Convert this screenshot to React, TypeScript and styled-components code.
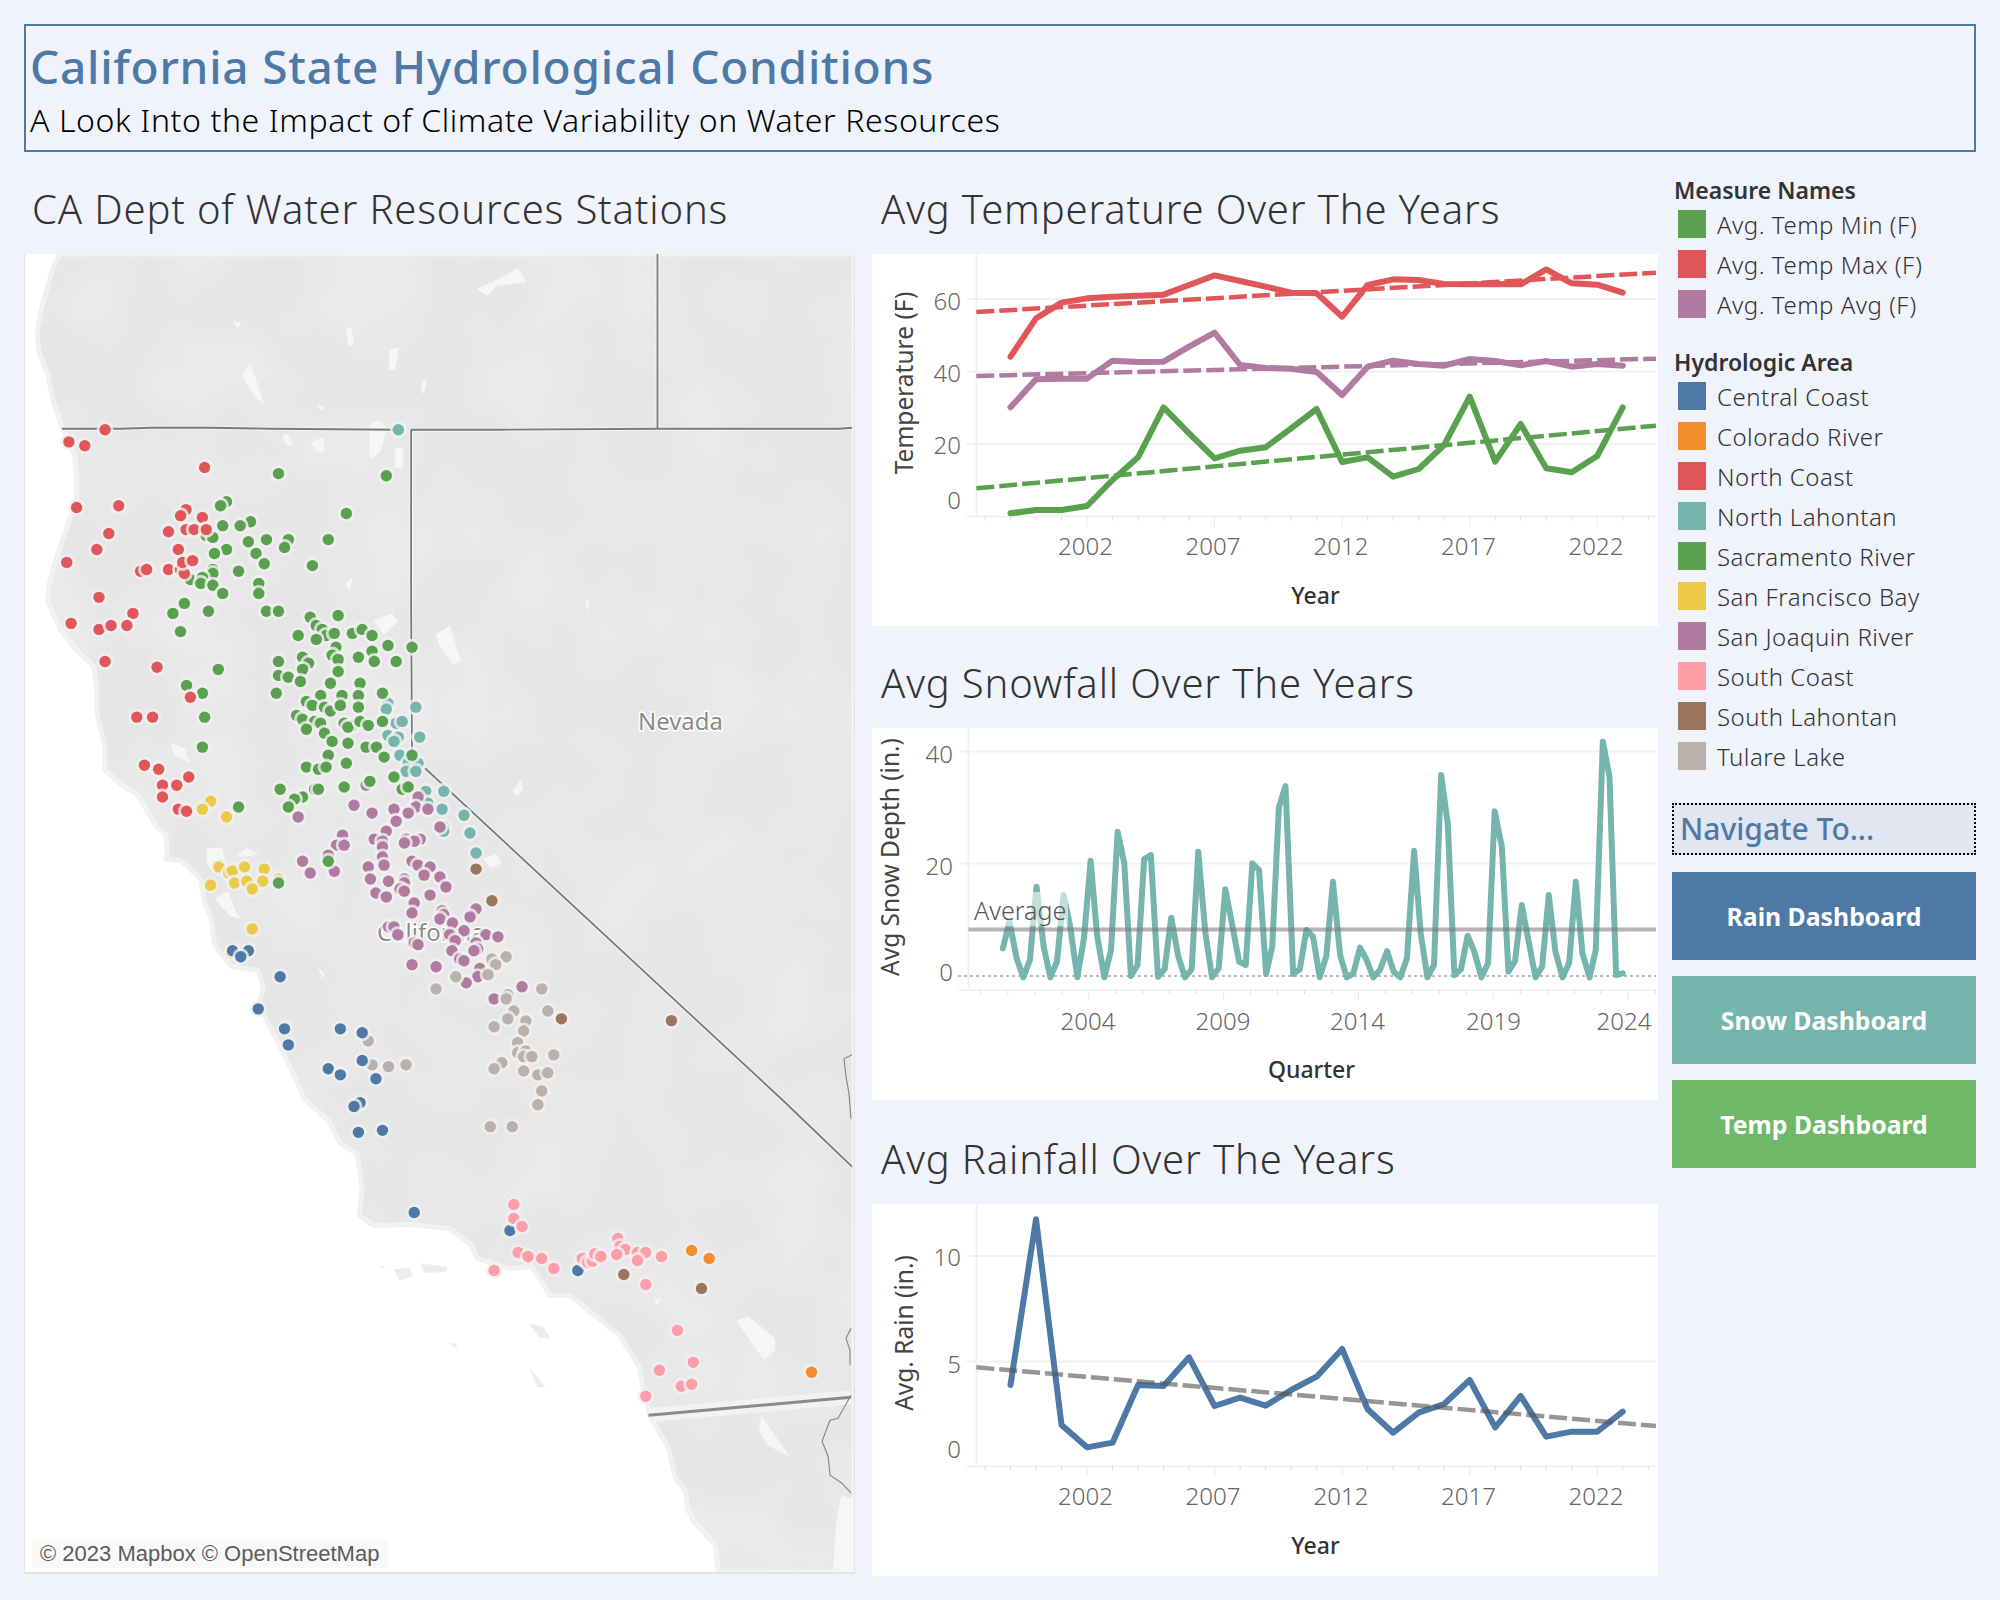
import React from "react";
import styled, { createGlobalStyle } from "styled-components";

const Global = createGlobalStyle`
  html, body { margin: 0; padding: 0; background: #f0f3fb; }
  * { box-sizing: border-box; }
`;

const UI = `"Noto Sans", "Open Sans", sans-serif`;

const Page = styled.div`
  width: 2000px;
  height: 1600px;
  padding: 24px;
  background: #f0f3fb;
  font-family: ${UI};
`;
const Header = styled.header`
  height: 128px;
  border: 2px solid #4e79a7;
  padding: 10px 0 0 4px;
`;
const Title = styled.h1`
  margin: 0;
  font-size: 46px;
  line-height: 60px;
  font-weight: 500;
  color: #4e79a7;
  letter-spacing: 0.75px;
  white-space: nowrap;
`;
const Subtitle = styled.p`
  margin: 4px 0 0;
  font-size: 32px;
  line-height: 40px;
  font-weight: 300;
  letter-spacing: 0.6px;
  color: #000;
  white-space: nowrap;
`;
const Main = styled.main`
  display: flex;
  margin-top: 18px;
`;
const MapColumn = styled.section`
  width: 831px;
  margin-right: 17px;
`;
const MidColumn = styled.div`
  width: 786px;
  margin-right: 14px;
`;
const SideColumn = styled.aside`
  width: 304px;
`;
const SectionTitle = styled.h2<{ $indent: number }>`
  margin: 0;
  height: 84px;
  padding: 14px 0 0 ${(p) => p.$indent}px;
  font-size: 40px;
  line-height: 50px;
  font-weight: 300;
  letter-spacing: 0.85px;
  color: #333;
  white-space: nowrap;
`;
const ChartBlock = styled.section<{ $gap: number }>`
  margin-top: ${(p) => p.$gap}px;
`;
const ChartPanel = styled.div`
  height: 372px;
  background: #fff;
`;
const Frame = styled.svg`
  display: block;
  width: 100%;
  height: 100%;
`;
const MapPanel = styled.div`
  position: relative;
  height: 1320px;
  background: #fff;
  border-left: 1px solid #e4e4e4;
  border-right: 1px solid #e4e4e4;
  border-bottom: 2px solid #e4e4e4;
`;
const Attribution = styled.div`
  position: absolute;
  left: 7px;
  bottom: 4px;
  width: 356px;
  height: 29px;
  padding-left: 8px;
  background: rgba(248, 248, 248, 0.8);
  font-family: "Liberation Sans", Arial, sans-serif;
  font-size: 22px;
  line-height: 29px;
  color: #5c5c5c;
  white-space: nowrap;
`;
const MapLabel = styled.text`
  font-family: ${UI};
  font-size: 24px;
  fill: #8a8a8a;
  stroke: #fff;
  stroke-width: 3px;
  paint-order: stroke;
  text-anchor: middle;
`;
const TickLabel = styled.text<{ $anchor: string }>`
  font-family: ${UI};
  font-size: 24px;
  font-weight: 300;
  fill: #666;
  text-anchor: ${(p) => p.$anchor};
`;
const AxisTitleY = styled.text`
  font-family: ${UI};
  font-size: 24.5px;
  font-weight: 400;
  fill: #444;
  text-anchor: middle;
`;
const AxisTitleX = styled.text`
  font-family: ${UI};
  font-size: 23px;
  font-weight: 500;
  fill: #333;
  text-anchor: middle;
`;
const AverageText = styled.text`
  font-family: ${UI};
  font-size: 25px;
  font-weight: 300;
  fill: #555;
`;
const LegendTitle = styled.h3<{ $top: number }>`
  margin: ${(p) => p.$top}px 0 0 2px;
  height: 33.7px;
  padding-top: 8px;
  font-size: 23px;
  line-height: 24px;
  font-weight: 600;
  color: #333;
  white-space: nowrap;
`;
const LegendRow = styled.div`
  display: flex;
  align-items: center;
  height: 40px;
  padding-left: 6px;
`;
const Swatch = styled.span<{ $color: string }>`
  width: 28px;
  height: 28px;
  margin-right: 11px;
  background: ${(p) => p.$color};
`;
const LegendText = styled.span`
  padding-top: 2px;
  font-size: 24px;
  font-weight: 300;
  letter-spacing: 0.5px;
  color: #333;
  white-space: nowrap;
`;
const NavLabel = styled.div`
  height: 52px;
  margin-top: 27px;
  border: 2px dotted #000;
  background: #e2e6f0;
  padding-left: 6px;
  font-size: 30px;
  line-height: 48px;
  font-weight: 500;
  color: #4e79a7;
`;
const NavButton = styled.a<{ $color: string; $first?: boolean }>`
  display: flex;
  align-items: center;
  justify-content: center;
  height: 88px;
  margin-top: ${(p) => (p.$first ? 17 : 16)}px;
  background: ${(p) => p.$color};
  color: #fff;
  font-size: 24.8px;
  font-weight: 700;
`;

const C = {
  blue: "#4e79a7",
  orange: "#f28e2b",
  red: "#e15759",
  teal: "#76b5ae",
  green: "#59a14f",
  yellow: "#edc948",
  purple: "#b07aa1",
  pink: "#ff9da7",
  brown: "#9c755f",
  tan: "#bab0ac",
};

type P = [number, number];
const z1 = (p: P): P => [p[0] / 1.823, p[1] / 2.8];
const z2 = (p: P): P => [p[0] / 1.823, 560 + p[1] / 2.8];
const z3 = (p: P): P => [p[0] / 1.823, 1100 + p[1] / 3];

const dotGroups: { color: string; pts: P[] }[] = [
  {
    color: C.teal,
    pts: [z1([726, 1204]), ...([[707,403],[704,420],[758,414],[722,459],[733,454],[707,493],[726,498],[718,510],[765,498],[729,549],[744,571],[762,571],[740,594],[758,594],[776,650],[809,650],[780,683],[806,700],[846,717],[809,750],[809,762],[857,767],[868,823]] as P[]).map(z2)],
  },
  {
    color: C.green,
    pts: [
      ...([[507,1327],[704,1333],[631,1439],[412,1406],[401,1417],[456,1462],[437,1473],[405,1473],[375,1501],[387,1506],[452,1518],[485,1512],[525,1512],[518,1534],[598,1512],[412,1540],[390,1551],[466,1551]] as P[]).map(z1),
      ...([[481,12],[387,28],[387,39],[434,33],[569,17],[346,56],[368,50],[365,67],[387,72],[405,95],[471,67],[471,95],[335,123],[314,151],[379,145],[485,145],[507,145],[328,202],[565,162],[616,157],[576,185],[587,196],[594,213],[609,207],[642,207],[660,196],[678,213],[543,213],[576,224],[707,241],[751,246],[612,246],[605,268],[616,280],[653,274],[678,257],[682,286],[722,286],[507,286],[551,274],[562,291],[551,308],[616,314],[507,325],[525,330],[547,342],[602,347],[656,347],[397,308],[339,353],[368,375],[503,375],[584,381],[623,381],[653,381],[697,375],[558,398],[569,409],[591,414],[602,425],[620,409],[653,414],[372,442],[540,437],[551,448],[573,454],[584,459],[627,459],[642,465],[634,470],[656,454],[671,465],[697,454],[558,476],[591,487],[605,510],[634,515],[667,526],[686,526],[368,526],[598,549],[700,554],[751,549],[631,571],[558,582],[580,588],[594,582],[718,610],[510,644],[573,644],[580,644],[627,638],[733,644],[744,638],[551,666],[536,672],[525,694],[434,694]] as P[]).map(z2),
    ],
  },
  {
    color: C.red,
    pts: [
      ...([[190,1204],[124,1238],[153,1249],[372,1310],[138,1422],[215,1417],[338,1428],[328,1445],[368,1450],[306,1490],[338,1484],[353,1484],[375,1484],[197,1495],[324,1540],[175,1540]] as P[]).map(z1),
      ...([[120,8],[255,33],[266,28],[306,28],[328,28],[335,39],[332,8],[350,3],[179,106],[241,151],[128,179],[179,196],[201,185],[230,185],[190,286],[285,302],[346,386],[248,442],[277,442],[262,577],[288,588],[343,610],[295,633],[321,633],[295,666],[324,700],[339,706]] as P[]).map(z2),
    ],
  },
  {
    color: C.yellow,
    pts: ([[383,678],[368,700],[412,722],[398,862],[416,879],[423,873],[445,862],[481,868],[507,896],[427,907],[449,902],[478,902],[383,913],[459,924],[459,1036],[421,1104]] as P[]).map(z2),
  },
  {
    color: C.purple,
    pts: ([[667,633],[762,666],[645,689],[758,694],[780,700],[718,700],[678,711],[744,711],[543,722],[722,734],[802,750],[704,762],[624,773],[682,784],[697,790],[766,784],[740,784],[755,790],[737,795],[613,801],[627,801],[697,806],[598,829],[697,834],[551,846],[751,846],[762,857],[784,862],[700,857],[671,862],[565,879],[609,874],[773,885],[802,890],[675,896],[737,896],[708,902],[737,907],[813,918],[729,924],[737,930],[685,935],[704,946],[784,941],[755,963],[868,980],[806,985],[751,991],[809,996],[857,1002],[802,1008],[825,1019],[708,1030],[718,1030],[846,1041],[886,1052],[908,1058],[820,1052],[725,1052],[830,1069],[868,1075],[755,1075],[762,1080],[824,1097],[871,1092],[864,1097],[838,1120],[846,1125],[751,1136],[795,1142],[875,1147],[871,1170],[850,1187],[952,1198],[901,1232]] as P[]).map(z2),
  },
  {
    color: C.green,
    pts: ([[674,622],[598,846],[507,907]] as P[]).map(z2),
  },
  {
    color: C.brown,
    pts: [...([[868,868],[897,957],[1024,1288],[1225,1293]] as P[]).map(z2), ...([[1138,528],[1280,570]] as P[]).map(z3)],
  },
  {
    color: C.tan,
    pts: [...([[897,1120],[923,1114],[904,1136],[890,1164],[831,1170],[795,1204],[988,1204],[926,1220],[923,1232],[937,1266],[999,1266],[926,1288],[959,1294],[901,1310],[955,1322],[944,1355],[944,1383],[959,1378],[955,1394],[970,1394],[1010,1389],[915,1411],[901,1428],[955,1434],[981,1445],[999,1439],[988,1490],[981,1529],[671,1350],[678,1417],[708,1422],[740,1417]] as P[]).map(z2), ...([[894,84],[934,84]] as P[]).map(z3)],
  },
  {
    color: C.blue,
    pts: [...([[423,1097],[452,1097],[438,1114],[510,1170],[470,1260],[518,1316],[620,1316],[660,1327],[525,1361],[660,1405],[598,1428],[620,1445],[685,1456],[656,1523],[645,1534]] as P[]).map(z2), ...([[653,101],[697,95],[755,342],[930,396],[1054,516]] as P[]).map(z3)],
  },
  {
    color: C.pink,
    pts: ([[937,318],[937,360],[952,384],[945,462],[963,474],[988,480],[901,516],[1010,510],[1127,420],[1131,444],[1141,453],[1125,468],[1062,480],[1072,492],[1081,488],[1085,466],[1096,474],[1163,462],[1178,462],[1163,486],[1207,474],[1178,558],[1236,696],[1265,792],[1203,816],[1243,864],[1262,858],[1178,894]] as P[]).map(z3),
  },
  {
    color: C.orange,
    pts: ([[1262,456],[1294,480],[1481,822]] as P[]).map(z3),
  },
];

const land =
  "59,254 52,268 47,286 40,310 36,332 38,352 47,375 52,400 60,425 74,457 76,480 76,500 63,536 55,560 48,585 47,603 60,631 75,650 93,667 96,690 96,714 104,746 104,771 120,785 137,796 156,828 165,835 167,853 165,860 181,862 200,880 204,903 211,921 214,946 230,967 258,972 263,989 258,1006 277,1042 291,1071 304,1100 329,1123 340,1145 357,1155 362,1190 359,1217 373,1227 410,1226 450,1230 472,1247 477,1260 510,1270 532,1268 546,1290 549,1297 570,1297 620,1337 639,1367 650,1417 669,1450 676,1480 686,1493 688,1510 694,1523 716,1547 719,1574 855,1574 855,254";

const lakes = [
  "477,289 499,279 518,268 527,282 496,286 488,296",
  "346,329 351,327 354,345 348,346",
  "233,321 241,323 237,328",
  "389,350 399,348 395,370 389,370",
  "241,375 250,364 258,387 263,404 255,398",
  "422,381 427,380 424,394 421,392",
  "317,404 325,409 321,411",
  "370,425 378,420 387,428 381,450 373,459 369,457",
  "395,448 403,448 403,468 395,468",
  "282,436 288,434 293,446 285,445",
  "310,443 324,437 324,452 317,452",
  "436,635 450,626 461,662 453,665 439,646",
  "373,621 392,614 398,622 384,635",
  "170,744 184,749 189,764 173,755",
  "513,792 521,780 523,789 518,797",
  "483,860 496,855 502,864 491,869",
  "206,849 222,849 225,864 211,871 206,864",
  "236,856 247,849 258,856 241,858",
  "215,899 228,892 236,914 241,920 230,917 219,906",
  "737,1322 749,1318 776,1340 776,1352 765,1362 751,1343",
  "762,1417 790,1458 768,1447 760,1433",
  "842,1497 855,1502 855,1574 834,1574 837,1527",
  "654,1303 661,1299 658,1306",
  "318,968 325,975 322,980",
  "345,585 352,578 350,592",
  "585,602 590,600 588,612",
];
const islands = [
  "394,1271 409,1269 413,1278 399,1282",
  "420,1265 447,1268 447,1273 425,1275",
  "529,1325 543,1328 551,1340 540,1340",
  "450,1345 455,1345 458,1349 453,1349",
  "529,1369 546,1389 538,1389",
  "378,1267 386,1268 383,1270",
];
const borders = [
  "61,429 120,429 150,428 210,428 270,429 400,430",
  "411,430 500,430 658,429 840,429 853,428",
  "658,254 658,429",
  "411,430 411,600 412,755",
  "425,769 782,1100 853,1168",
];
const thin = [
  "852,1397 839,1420 831,1422 823,1443 829,1458 831,1477 843,1485 852,1495",
  "853,1056 845,1060 847,1078 850,1095 852,1120",
  "852,1330 847,1340 851,1352 851,1367",
];

function CaMap() {
  return (
    <Frame viewBox="24 254 831 1320" preserveAspectRatio="none">
      <defs>
        <filter id="mottle" x="0" y="0" width="100%" height="100%">
          <feTurbulence type="fractalNoise" baseFrequency="0.012" numOctaves={2} seed={4} />
          <feColorMatrix values="0 0 0 0 1  0 0 0 0 1  0 0 0 0 1  0.45 0 0 0 -0.16" />
        </filter>
        <clipPath id="landClip">
          <polygon points={land} />
        </clipPath>
      </defs>
      <polygon points={land} fill="#e6e6e6" stroke="#f1f1f1" strokeWidth={5} strokeLinejoin="round" />
      <g clipPath="url(#landClip)">
        <rect x={24} y={254} width={831} height={1320} filter="url(#mottle)" />
      </g>
      {lakes.map((d) => (
        <polygon key={d} points={d} fill="#f6f6f6" />
      ))}
      {islands.map((d) => (
        <polygon key={d} points={d} fill="#ededed" />
      ))}
      <polyline points="649,1417 852,1399" fill="none" stroke="#f2f2f2" strokeWidth={14} />
      {borders.map((d) => (
        <polyline key={d} points={d} fill="none" stroke="#f4f4f4" strokeWidth={4} />
      ))}
      {thin.map((d) => (
        <polyline key={d} points={d} fill="none" stroke="#8a8a8a" strokeWidth={1.2} />
      ))}
      {borders.map((d) => (
        <polyline key={d + "l"} points={d} fill="none" stroke="#7a7a7a" strokeWidth={1.8} />
      ))}
      <polyline points="649,1417 852,1399" fill="none" stroke="#8a8a8a" strokeWidth={3} />
      <MapLabel x={681} y={731}>Nevada</MapLabel>
      <MapLabel x={431} y={942}>California</MapLabel>
      {dotGroups.map((g, i) => (
        <g key={i} fill={g.color}>
          {g.pts.map((p, j) => (
            <circle key={j} cx={p[0]} cy={p[1]} r={5.7} stroke="rgba(240,240,240,0.8)" strokeWidth={5.6} paintOrder="stroke" />
          ))}
        </g>
      ))}
    </Frame>
  );
}

// Year-based charts: zoomed x runs 295 (1999) .. 1495 (2023) in steps of 50.
const xs = Array.from({ length: 25 }, (_, i) => 295 + i * 50);
const series = (ys: number[], y0: number) => ys.map((y, i) => `${860 + xs[i] / 1.96},${y0 + y / 3}`).join(" ");
const seg = (a: P, b: P, y0: number) => `${860 + a[0] / 1.96},${y0 + a[1] / 3} ${860 + b[0] / 1.96},${y0 + b[1] / 3}`;

const tempRed = [560,445,398,385,380,377,374,345,316,333,350,368,370,440,345,328,330,342,343,342,343,298,340,344,368];
const tempPurple = [712,628,626,626,572,576,575,530,488,585,594,596,606,675,590,572,582,587,567,573,586,573,590,582,587];
const tempGreen = [1030,1020,1020,1008,930,862,712,790,865,842,832,775,717,876,862,920,897,825,680,875,762,895,907,858,712];
const rain = [795,298,915,982,968,795,798,712,858,833,857,810,770,687,868,938,878,852,780,922,828,950,935,935,875];
const snow: P[] = [[280,895],[293,815],[307,925],[320,982],[333,930],[346,710],[360,890],[373,982],[386,935],[399,735],[412,830],[426,982],[439,865],[452,632],[465,860],[479,982],[492,900],[505,545],[518,640],[531,978],[544,945],[557,628],[570,615],[584,980],[597,958],[610,803],[624,920],[637,982],[650,958],[663,605],[677,850],[690,982],[703,955],[716,718],[729,820],[743,935],[756,945],[769,640],[782,660],[796,972],[808,890],[821,472],[834,408],[849,972],[862,958],[875,840],[888,860],[901,982],[914,918],[927,695],[941,915],[954,982],[967,970],[980,893],[993,930],[1006,982],[1019,960],[1033,903],[1046,965],[1059,982],[1072,925],[1086,602],[1099,850],[1112,982],[1125,945],[1139,375],[1152,520],[1165,975],[1178,958],[1191,857],[1204,905],[1218,982],[1231,940],[1244,484],[1258,590],[1271,965],[1284,932],[1297,765],[1310,870],[1324,982],[1337,950],[1350,735],[1363,905],[1377,982],[1390,938],[1403,695],[1416,910],[1430,982],[1442,900],[1456,275],[1469,380],[1482,975],[1495,970]];

const GRID = "#f1f1f1";
const LINE = 6;

function Axes({ left, bottom, grid, ticks, right = 1656 }: { left: number; bottom: number; grid: number[]; ticks: { x: number; major: boolean }[]; right?: number }) {
  return (
    <g stroke={GRID} strokeWidth={2} fill="none">
      <line x1={left} y1={bottom} x2={left} y2={bottom - 264} />
      <line x1={left - 10} y1={bottom} x2={right} y2={bottom} />
      {grid.map((y) => (
        <line key={y} x1={left - 10} y1={y} x2={right} y2={y} />
      ))}
      {ticks.map((t) => (
        <line key={t.x} x1={t.x} y1={bottom} x2={t.x} y2={bottom + (t.major ? 10 : 4)} stroke={t.major ? "#e8e8e8" : "#dcdcdc"} strokeWidth={1} />
      ))}
    </g>
  );
}

const yearTicks = Array.from({ length: 27 }, (_, i) => ({
  x: 860 + (245 + i * 50) / 1.96,
  major: (i - 4) % 5 === 0,
}));
const snowTicks = Array.from({ length: 26 }, (_, i) => ({
  x: 860 + (237 + i * 52.85) / 1.96,
  major: (i - 4) % 5 === 0,
}));
const yearLabels = ["2002", "2007", "2012", "2017", "2022"];
const yearLabelX = [1085.5, 1213, 1341, 1468.5, 1596];

function TempChart() {
  return (
    <Frame viewBox="872 254 786 372">
      <Axes left={976.5} bottom={516.5} grid={[299, 371.5, 444]} ticks={yearTicks} />
      <polyline points={series(tempRed, 170)} fill="none" stroke={C.red} strokeWidth={LINE} strokeLinejoin="round" strokeLinecap="round" />
      <polyline points={series(tempPurple, 170)} fill="none" stroke={C.purple} strokeWidth={LINE} strokeLinejoin="round" strokeLinecap="round" />
      <polyline points={series(tempGreen, 170)} fill="none" stroke={C.green} strokeWidth={LINE} strokeLinejoin="round" strokeLinecap="round" />
      <polyline points={seg([228, 426], [1560, 308], 170)} fill="none" stroke={C.red} strokeWidth={4.5} strokeDasharray="18 5" />
      <polyline points={seg([228, 618], [1560, 566], 170)} fill="none" stroke={C.purple} strokeWidth={4.5} strokeDasharray="18 5" />
      <polyline points={seg([228, 955], [1560, 767], 170)} fill="none" stroke={C.green} strokeWidth={4.5} strokeDasharray="18 5" />
      <TickLabel $anchor="end" x={961} y={310}>60</TickLabel>
      <TickLabel $anchor="end" x={961} y={382}>40</TickLabel>
      <TickLabel $anchor="end" x={961} y={454}>20</TickLabel>
      <TickLabel $anchor="end" x={961} y={509}>0</TickLabel>
      {yearLabels.map((t, i) => (
        <TickLabel key={t} $anchor="middle" x={yearLabelX[i]} y={555}>{t}</TickLabel>
      ))}
      <AxisTitleY transform="translate(913 383) rotate(-90)">Temperature (F)</AxisTitleY>
      <AxisTitleX x={1315.5} y={604}>Year</AxisTitleX>
    </Frame>
  );
}

function SnowChart() {
  const pts = snow.map((p) => `${860 + p[0] / 1.96},${650 + p[1] / 3}`).join(" ");
  return (
    <Frame viewBox="872 728 786 372">
      <Axes left={968.5} bottom={990} grid={[751.5, 863.5]} ticks={snowTicks} />
      <line x1={958} y1={976} x2={1656} y2={976} stroke="#bbb" strokeWidth={2} strokeDasharray="3 3" />
      <polyline points={pts} fill="none" stroke={C.teal} strokeWidth={LINE} strokeLinejoin="round" strokeLinecap="round" />
      <rect x={972} y={892} width={96} height={34} fill="#fff" opacity={0.55} />
      <line x1={968.5} y1={929.5} x2={1656} y2={929.5} stroke="#777" strokeOpacity={0.55} strokeWidth={4} />
      <AverageText x={974} y={920}>Average</AverageText>
      <TickLabel $anchor="end" x={953} y={763}>40</TickLabel>
      <TickLabel $anchor="end" x={953} y={875}>20</TickLabel>
      <TickLabel $anchor="end" x={953} y={981}>0</TickLabel>
      {["2004", "2009", "2014", "2019", "2024"].map((t, i) => (
        <TickLabel key={t} $anchor="middle" x={[1088, 1223, 1357.5, 1493.5, 1624][i]} y={1030}>{t}</TickLabel>
      ))}
      <AxisTitleY transform="translate(899 857) rotate(-90)">Avg Snow Depth (in.)</AxisTitleY>
      <AxisTitleX x={1311.5} y={1078}>Quarter</AxisTitleX>
    </Frame>
  );
}

function RainChart() {
  return (
    <Frame viewBox="872 1204 786 372">
      <Axes left={976.5} bottom={1466.5} grid={[1256, 1361.5]} ticks={yearTicks} />
      <polyline points={series(rain, 1120)} fill="none" stroke={C.blue} strokeWidth={LINE} strokeLinejoin="round" strokeLinecap="round" />
      <polyline points={seg([228, 742], [1560, 918], 1120)} fill="none" stroke="#555" strokeOpacity={0.62} strokeWidth={4.5} strokeDasharray="18 5" />
      <TickLabel $anchor="end" x={961} y={1266}>10</TickLabel>
      <TickLabel $anchor="end" x={961} y={1373}>5</TickLabel>
      <TickLabel $anchor="end" x={961} y={1458}>0</TickLabel>
      {yearLabels.map((t, i) => (
        <TickLabel key={t} $anchor="middle" x={yearLabelX[i]} y={1505}>{t}</TickLabel>
      ))}
      <AxisTitleY transform="translate(913 1333) rotate(-90)">Avg. Rain (in.)</AxisTitleY>
      <AxisTitleX x={1315.5} y={1554}>Year</AxisTitleX>
    </Frame>
  );
}

const measures = [
  ["Avg. Temp Min (F)", C.green],
  ["Avg. Temp Max (F)", C.red],
  ["Avg. Temp Avg (F)", C.purple],
];
const areas = [
  ["Central Coast", C.blue],
  ["Colorado River", C.orange],
  ["North Coast", C.red],
  ["North Lahontan", C.teal],
  ["Sacramento River", C.green],
  ["San Francisco Bay", C.yellow],
  ["San Joaquin River", C.purple],
  ["South Coast", C.pink],
  ["South Lahontan", C.brown],
  ["Tulare Lake", C.tan],
];

export default function App() {
  return (
    <Page>
      <Global />
      <Header>
        <Title>California State Hydrological Conditions</Title>
        <Subtitle>A Look Into the Impact of Climate Variability on Water Resources</Subtitle>
      </Header>
      <Main>
        <MapColumn>
          <SectionTitle $indent={8}>CA Dept of Water Resources Stations</SectionTitle>
          <MapPanel>
            <CaMap />
            <Attribution>© 2023 Mapbox © OpenStreetMap</Attribution>
          </MapPanel>
        </MapColumn>
        <MidColumn>
          <ChartBlock $gap={0}>
            <SectionTitle $indent={9}>Avg Temperature Over The Years</SectionTitle>
            <ChartPanel><TempChart /></ChartPanel>
          </ChartBlock>
          <ChartBlock $gap={18}>
            <SectionTitle $indent={9}>Avg Snowfall Over The Years</SectionTitle>
            <ChartPanel><SnowChart /></ChartPanel>
          </ChartBlock>
          <ChartBlock $gap={20}>
            <SectionTitle $indent={9}>Avg Rainfall Over The Years</SectionTitle>
            <ChartPanel><RainChart /></ChartPanel>
          </ChartBlock>
        </MidColumn>
        <SideColumn>
          <LegendTitle $top={0}>Measure Names</LegendTitle>
          {measures.map(([t, c]) => (
            <LegendRow key={t}>
              <Swatch $color={c} />
              <LegendText>{t}</LegendText>
            </LegendRow>
          ))}
          <LegendTitle $top={18.6}>Hydrologic Area</LegendTitle>
          {areas.map(([t, c]) => (
            <LegendRow key={t}>
              <Swatch $color={c} />
              <LegendText>{t}</LegendText>
            </LegendRow>
          ))}
          <NavLabel>Navigate To...</NavLabel>
          <NavButton $color="#4e79a7" $first>Rain Dashboard</NavButton>
          <NavButton $color="#76b5ae">Snow Dashboard</NavButton>
          <NavButton $color="#6fb868">Temp Dashboard</NavButton>
        </SideColumn>
      </Main>
    </Page>
  );
}
